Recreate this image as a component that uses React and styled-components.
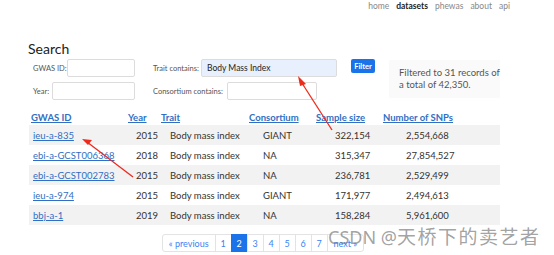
import React from "react";
import styled, { createGlobalStyle } from "styled-components";

const GlobalStyle = createGlobalStyle`
  body {
    margin: 0;
    background: #fff;
    font-family: Lato, "Open Sans", sans-serif;
    color: #333;
  }
`;

const Page = styled.div`
  position: relative;
  width: 554px;
  height: 255px;
  overflow: hidden;
`;

const Nav = styled.nav`
  display: flex;
  justify-content: flex-end;
  gap: 7px;
  padding: 0 44px 0 0;
  height: 14px;
  font-size: 8.5px;
  line-height: 12px;
`;

const NavLink = styled.span`
  color: ${props => (props.active ? "#222" : "#888")};
  font-weight: ${props => (props.active ? 700 : 400)};
`;

const Main = styled.div`
  padding: 26px 0 0 28px;
`;

const Title = styled.h1`
  margin: 0;
  font-size: 14px;
  font-weight: 400;
  line-height: 18px;
  color: #222;
`;

const FormRow = styled.div`
  display: flex;
  align-items: flex-start;
  margin-top: 1px;
  padding-left: 5px;
`;

const FieldGroup = styled.div`
  display: flex;
  flex-direction: column;
  gap: 5px;
  width: ${props => props.width}px;
`;

const Field = styled.label`
  display: flex;
  align-items: center;
  justify-content: space-between;
  height: 18px;
  font-size: 7.5px;
  color: #555;
  white-space: nowrap;
  width: ${props => props.width}px;
`;

const Input = styled.div`
  box-sizing: border-box;
  flex: none;
  width: ${props => props.width}px;
  height: 18px;
  border: 1px solid #dcdcdc;
  border-radius: 2px;
  background: ${props => (props.filled ? "#e8f0fe" : "#fff")};
  font-size: 8.5px;
  color: #222;
  padding: 0 5px;
  display: flex;
  align-items: center;
`;

const FilterButton = styled.button`
  margin-left: 14px;
  width: 24px;
  height: 14px;
  padding: 0;
  border: none;
  border-radius: 2px;
  background: #1a73e8;
  color: #fff;
  font-family: inherit;
  font-size: 7.5px;
  font-weight: 700;
`;

const InfoBox = styled.div`
  margin: 1px 0 0 14px;
  box-sizing: border-box;
  width: 111px;
  height: 38px;
  background: #fafafa;
  padding: 7px 10px;
  font-size: 9.5px;
  line-height: 12px;
  color: #555;
  white-space: nowrap;
`;

const Table = styled.div`
  width: 471px;
  margin: 10px 0 0 1px;
  font-size: 9.5px;
`;

const HeadRow = styled.div`
  display: grid;
  grid-template-columns: 97px 33px 88px 67px 67px 1fr;
  padding-left: 2px;
  height: 15px;
  align-items: center;
`;

const HeadCell = styled.span`
  color: #2f6fc4;
  font-weight: 700;
  text-decoration: underline;
`;

const Row = styled.div`
  display: grid;
  grid-template-columns: 103px 34px 93px 72px 71px 1fr;
  padding-left: 4px;
  height: 20px;
  align-items: center;
  background: ${props => (props.striped ? "#f2f2f2" : "#fff")};
  color: #333;
`;

const IdLink = styled.span`
  color: #2f6fc4;
  text-decoration: underline;
`;

const Pager = styled.div`
  display: flex;
  justify-content: center;
  margin-top: 9px;
  width: 471px;
`;

const PageBox = styled.span`
  box-sizing: border-box;
  height: 18px;
  min-width: 17px;
  padding: 0 ${props => (props.wide ? 6 : 0)}px;
  display: flex;
  align-items: center;
  justify-content: center;
  font-size: 9px;
  border: 1px solid #e3e3e3;
  margin-left: -1px;
  color: ${props => (props.active ? "#fff" : "#3b82f6")};
  background: ${props => (props.active ? "#1a73e8" : "#fff")};
  border-color: ${props => (props.active ? "#1a73e8" : "#e3e3e3")};
  &:first-child {
    border-radius: 3px 0 0 3px;
  }
  &:last-child {
    border-radius: 0 3px 3px 0;
  }
`;

const Watermark = styled.div`
  position: absolute;
  left: 328px;
  top: 222px;
  font-family: "Noto Sans", "Noto Sans CJK SC", sans-serif;
  font-size: 18px;
  color: rgba(110, 110, 110, 0.65);
  white-space: nowrap;
`;

const WatermarkName = styled.span`
  font-family: "Noto Sans CJK SC", sans-serif;
  font-size: 19px;
  letter-spacing: 1.5px;
`;

const Arrows = styled.svg`
  position: absolute;
  left: 0;
  top: 0;
  pointer-events: none;
`;

const rows = [
  ["ieu-a-835", "2015", "Body mass index", "GIANT", "322,154", "2,554,668"],
  ["ebi-a-GCST006368", "2018", "Body mass index", "NA", "315,347", "27,854,527"],
  ["ebi-a-GCST002783", "2015", "Body mass index", "NA", "236,781", "2,529,499"],
  ["ieu-a-974", "2015", "Body mass index", "GIANT", "171,977", "2,494,613"],
  ["bbj-a-1", "2019", "Body mass index", "NA", "158,284", "5,961,600"],
];

const pages = ["« previous", "1", "2", "3", "4", "5", "6", "7", "next »"];

const App = () => (
  <Page>
    <GlobalStyle />
    <Nav>
      <NavLink>home</NavLink>
      <NavLink active>datasets</NavLink>
      <NavLink>phewas</NavLink>
      <NavLink>about</NavLink>
      <NavLink>api</NavLink>
    </Nav>
    <Main>
      <Title>Search</Title>
      <FormRow>
        <FieldGroup width={120}>
          <Field width={102}>
            GWAS ID:
            <Input width={68} />
          </Field>
          <Field width={102}>
            Year:
            <Input width={83} />
          </Field>
        </FieldGroup>
        <FieldGroup width={184}>
          <Field width={184}>
            Trait contains:
            <Input width={136} filled>
              Body Mass Index
            </Input>
          </Field>
          <Field width={164}>
            Consortium contains:
            <Input width={90} />
          </Field>
        </FieldGroup>
        <FilterButton>Filter</FilterButton>
        <InfoBox>
          Filtered to 31 records of
          <br />a total of 42,350.
        </InfoBox>
      </FormRow>
      <Table>
        <HeadRow>
          <HeadCell>GWAS ID</HeadCell>
          <HeadCell>Year</HeadCell>
          <HeadCell>Trait</HeadCell>
          <HeadCell>Consortium</HeadCell>
          <HeadCell>Sample size</HeadCell>
          <HeadCell>Number of SNPs</HeadCell>
        </HeadRow>
        {rows.map((r, i) => (
          <Row key={r[0]} striped={i % 2 === 0}>
            <IdLink>{r[0]}</IdLink>
            {r.slice(1).map((c, j) => (
              <span key={j}>{c}</span>
            ))}
          </Row>
        ))}
      </Table>
      <Pager>
        {pages.map(p => (
          <PageBox key={p} active={p === "2"} wide={p.length > 1}>
            {p}
          </PageBox>
        ))}
      </Pager>
    </Main>
    <Watermark>
      CSDN @<WatermarkName>天桥下的卖艺者</WatermarkName>
    </Watermark>
    <Arrows width="554" height="255" viewBox="0 0 554 255">
      <g stroke="#ee2a1c" strokeWidth="1.3" fill="#ee2a1c">
        <line x1="332" y1="130" x2="300" y2="80" />
        <polygon points="298,76 306,84 300,86" stroke="none" />
        <line x1="133" y1="177" x2="87" y2="142" />
        <polygon points="82,139 92,140 88,145" stroke="none" />
      </g>
    </Arrows>
  </Page>
);

export default App;
